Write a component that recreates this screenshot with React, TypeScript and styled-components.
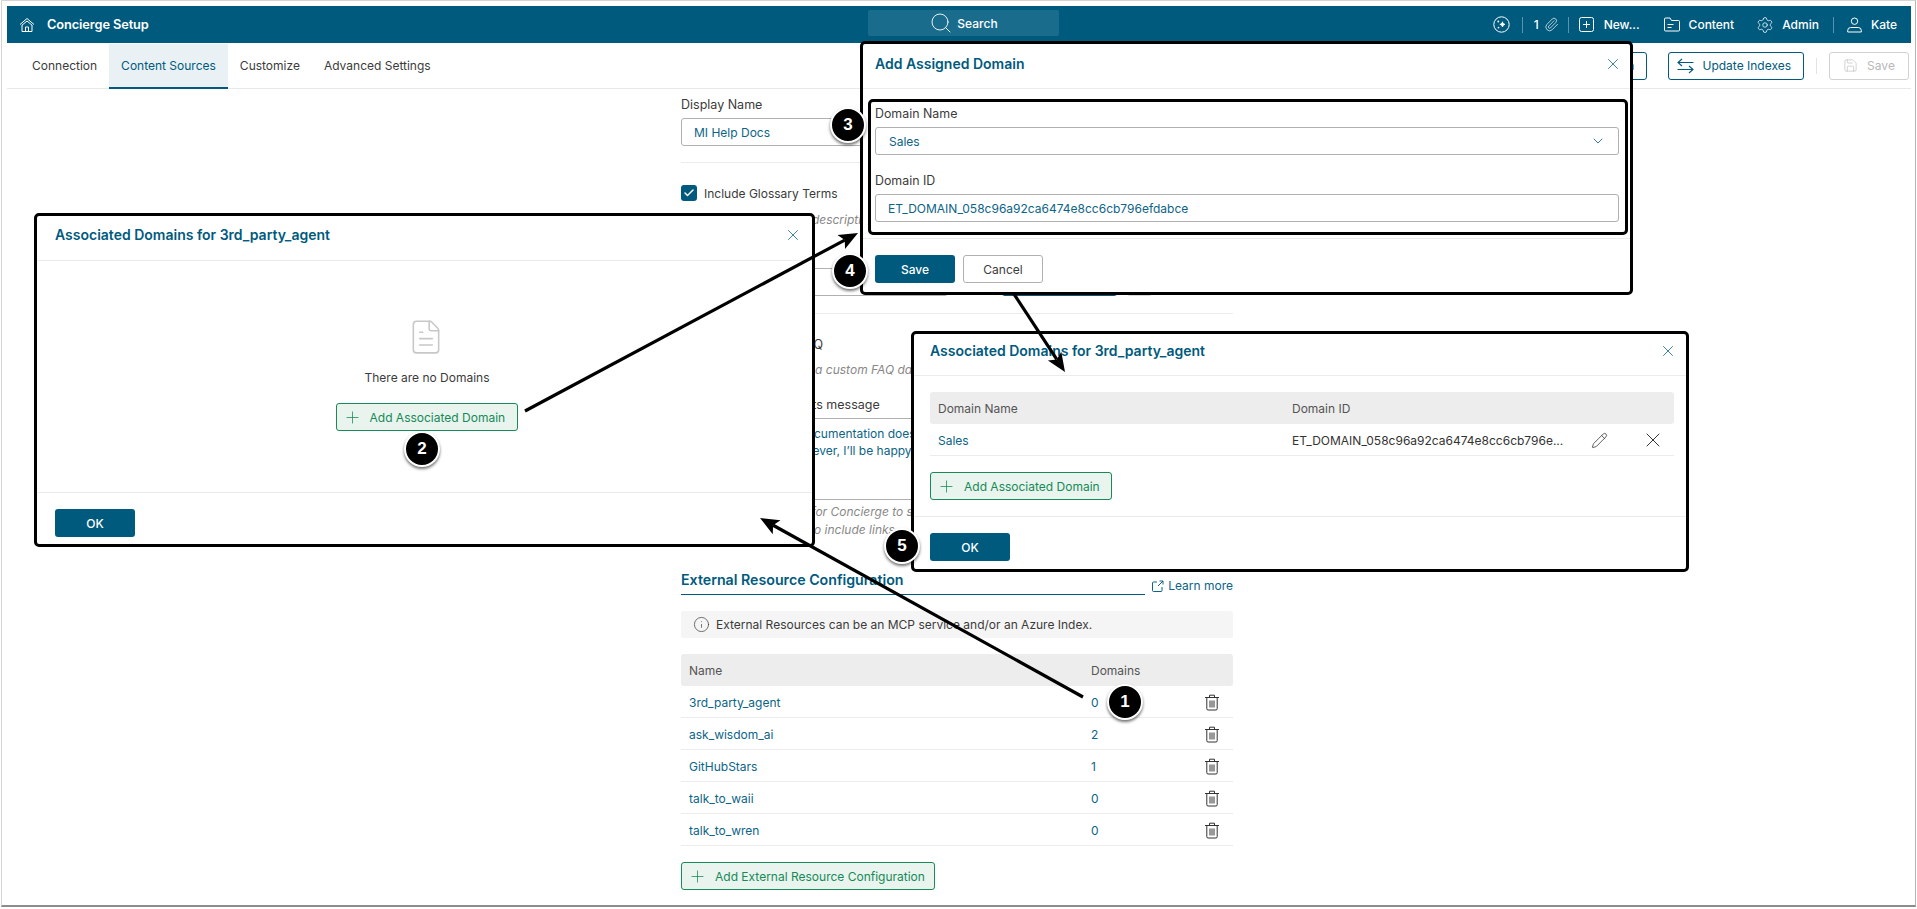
import React from 'react';
import styled, { createGlobalStyle } from 'styled-components';
import { ChevronDown, Check, Plus, X, Pencil, Search, Info, Paperclip, Settings, Save, FileText } from 'lucide-react';

const TEAL = '#005a7d';
const TEXT = '#3b3b3b';
const LINK = '#0c6486';
const GREEN = '#178a58';

const Global = createGlobalStyle`
  html, body { margin: 0; padding: 0; background: #fff; }
  * { box-sizing: border-box; }
  body { font-family: Inter, "Liberation Sans", sans-serif; font-size: 12px; color: ${TEXT}; }
`;

const Page = styled.div`
  position: relative;
  width: 1917px;
  height: 909px;
  overflow: hidden;
  background: #fff;
`;

const Frame = styled.div`
  width: 1915px;
  height: 907px;
  margin-left: 1px;
  padding: 5px 4px 0 5px;
  border: 1px solid #d4d4d4;
  border-right: 1px solid #b5b5b5;
  border-bottom: 2px solid #8c8c8c;
  overflow: hidden;
`;

const Header = styled.header`
  position: relative;
  display: flex;
  align-items: center;
  height: 37px;
  background: ${TEAL};
  color: #fff;
  padding-left: 12px;
`;

const Brand = styled.div`
  display: flex;
  align-items: center;
  gap: 12px;
  font-weight: 600;
  font-size: 12.8px;
  letter-spacing: -0.1px;
`;

const SearchBox = styled.div`
  position: absolute;
  left: 861px;
  top: 4px;
  width: 191px;
  height: 26px;
  display: flex;
  align-items: center;
  justify-content: center;
  gap: 4px;
  background: #1a6c8d;
  border-radius: 2px;
  font-size: 12px;
  font-weight: 500;
`;

const HeaderNav = styled.nav`
  margin-left: auto;
  display: flex;
  align-items: center;
  padding-right: 14px;
  font-size: 12px;
  font-weight: 500;
`;

const NavItem = styled.span<{ $ml?: number; $gap?: number }>`
  display: inline-flex;
  align-items: center;
  gap: ${(p) => p.$gap ?? 8}px;
  margin-left: ${(p) => p.$ml ?? 0}px;
`;

const NavSep = styled.span<{ $ml: number }>`
  display: inline-block;
  width: 1px;
  height: 16px;
  background: #5c93aa;
  margin-left: ${(p) => p.$ml}px;
`;

const TabBar = styled.div`
  display: flex;
  align-items: center;
  height: 46px;
  border-bottom: 1px solid #e8e8e8;
  padding-left: 13px;
  padding-right: 2px;
`;

const Tab = styled.div<{ $active?: boolean }>`
  height: 45px;
  padding: 0 12px;
  display: flex;
  align-items: center;
  font-size: 12px;
  color: ${(p) => (p.$active ? TEAL : TEXT)};
  background: ${(p) => (p.$active ? '#e9f1f5' : 'transparent')};
  border-bottom: 2px solid ${(p) => (p.$active ? TEAL : 'transparent')};
  margin-bottom: -1px;
`;

const TabActions = styled.div`
  margin-left: auto;
  display: flex;
  align-items: center;
`;

const OutlineButton = styled.button<{ $ml?: number }>`
  height: 28px;
  display: inline-flex;
  align-items: center;
  gap: 8px;
  margin-left: ${(p) => p.$ml ?? 0}px;
  padding: 0 12px 0 8px;
  background: #fff;
  border: 1px solid ${TEAL};
  border-radius: 3px;
  color: ${TEAL};
  font: 12px Inter, sans-serif;
`;

const DisabledButton = styled.button`
  width: 80px;
  height: 28px;
  display: inline-flex;
  align-items: center;
  justify-content: center;
  gap: 9px;
  background: #fff;
  border: 1px solid #d2d2d2;
  border-radius: 3px;
  color: #b8b8b8;
  font: 12px Inter, sans-serif;
`;

const ToolSep = styled.span`
  width: 1px;
  height: 16px;
  background: #e3e3e3;
  margin: 0 12px;
`;

const Main = styled.main`
  width: 552px;
  margin-left: 674px;
  padding-top: 7px;
  display: flex;
  flex-direction: column;
`;

const Line = styled.div<{ $mt?: number }>`
  margin-top: ${(p) => p.$mt ?? 0}px;
  height: 18px;
  line-height: 18px;
  font-size: 12.5px;
  color: ${TEXT};
  white-space: nowrap;
`;

const Hint = styled(Line)`
  font-size: 12px;
  font-style: italic;
  color: #888;
`;

const Input = styled.div<{ $mt?: number; $pad?: number }>`
  margin-top: ${(p) => p.$mt ?? 0}px;
  height: 28px;
  padding: 0 12px 0 ${(p) => p.$pad ?? 12}px;
  display: flex;
  align-items: center;
  justify-content: space-between;
  border: 1px solid #b0b0b0;
  border-radius: 3px;
  color: ${LINK};
  font-size: 12px;
  background: #fff;
`;

const Rule = styled.div<{ $mt: number }>`
  margin-top: ${(p) => p.$mt}px;
  height: 1px;
  background: #ececec;
`;

const CheckRow = styled.div`
  margin-top: 21px;
  height: 18px;
  display: flex;
  align-items: center;
  gap: 7px;
  font-size: 12px;
`;

const CheckBox = styled.span`
  width: 16px;
  height: 16px;
  border-radius: 3px;
  background: ${TEAL};
  color: #fff;
  display: flex;
  align-items: center;
  justify-content: center;
`;

const ActionRow = styled.div`
  margin-top: 39px;
  display: flex;
  height: 28px;
`;

const GhostInput = styled.div`
  width: 267px;
  border: 1px solid #b0b0b0;
  border-radius: 3px;
`;

const HiddenPrimary = styled.div`
  width: 115px;
  margin-left: 54px;
  background: ${TEAL};
  border-radius: 3px;
`;

const HiddenGrey = styled.div`
  width: 25px;
  margin-left: 10px;
  background: #d9d9d9;
  border-radius: 3px;
`;

const MessageBox = styled.div`
  margin-top: 4px;
  height: 82px;
  padding: 6px 12px 0 0;
  border-top: 1px solid #b0b0b0;
  border-bottom: 1px solid #b0b0b0;
  color: ${LINK};
  font-size: 12px;
  line-height: 17px;
  white-space: nowrap;
`;

const SectionRow = styled.div`
  margin-top: 32px;
  display: flex;
  align-items: flex-end;
  justify-content: space-between;
  height: 24px;
`;

const SectionTitle = styled.div`
  width: 464px;
  height: 24px;
  border-bottom: 1px solid ${TEAL};
  color: ${TEAL};
  font-size: 14.2px;
  font-weight: 600;
  line-height: 18px;
`;

const LearnMore = styled.a`
  display: inline-flex;
  align-items: center;
  gap: 4px;
  color: ${LINK};
  font-size: 12px;
  line-height: 18px;
`;

const InfoBar = styled.div`
  margin-top: 16px;
  height: 27px;
  display: flex;
  align-items: center;
  gap: 6px;
  padding-left: 12px;
  background: #f5f5f5;
  font-size: 12px;
  border-radius: 2px;
`;

const TableHead = styled.div<{ $cols: string; $mt?: number }>`
  margin-top: ${(p) => p.$mt ?? 0}px;
  height: 32px;
  display: grid;
  grid-template-columns: ${(p) => p.$cols};
  align-items: center;
  background: #ededed;
  border-radius: 3px;
  color: #555;
  font-size: 12px;
  padding-left: 8px;
`;

const TableRow = styled.div<{ $cols: string }>`
  height: 32px;
  display: grid;
  grid-template-columns: ${(p) => p.$cols};
  align-items: center;
  padding: 1px 0 0 8px;
  border-bottom: 1px solid #ececec;
  color: ${LINK};
  font-size: 12px;
`;

const Ellipsis = styled.span`
  color: #333;
  white-space: nowrap;
  overflow: hidden;
  text-overflow: ellipsis;
`;

const IconCell = styled.span`
  display: flex;
  align-items: center;
  justify-content: center;
  color: #333;
`;

const GreenButton = styled.button<{ $mt?: number; $w: number }>`
  margin-top: ${(p) => p.$mt ?? 0}px;
  width: ${(p) => p.$w}px;
  height: 28px;
  display: inline-flex;
  align-items: center;
  flex-shrink: 0;
  gap: 8px;
  padding: 0 0 0 6px;
  background: #e9f4ee;
  border: 1px solid ${GREEN};
  border-radius: 3px;
  color: ${GREEN};
  font: 12px Inter, sans-serif;
  white-space: nowrap;
`;

const Dialog = styled.section<{ $x: number; $y: number; $w: number; $h: number; $z?: number }>`
  position: absolute;
  left: ${(p) => p.$x}px;
  top: ${(p) => p.$y}px;
  width: ${(p) => p.$w}px;
  height: ${(p) => p.$h}px;
  z-index: ${(p) => p.$z ?? 2};
  display: flex;
  flex-direction: column;
  background: #fff;
  border: 3px solid #000;
  border-radius: 5px;
`;

const DialogHead = styled.div<{ $h: number; $pad: number; $top: number; $closeRight: number }>`
  height: ${(p) => p.$h}px;
  flex-shrink: 0;
  display: flex;
  align-items: flex-start;
  justify-content: space-between;
  padding: ${(p) => p.$top}px ${(p) => p.$closeRight}px 0 ${(p) => p.$pad}px;
  border-bottom: 1px solid #ececec;
`;

const DialogTitle = styled.h2`
  margin: 0;
  height: 20px;
  line-height: 20px;
  color: ${TEAL};
  font-size: 14px;
  font-weight: 600;
`;

const CloseBtn = styled.span`
  display: flex;
  height: 20px;
  align-items: center;
  color: ${TEAL};
`;

const EmptyBody = styled.div`
  flex: 1;
  display: flex;
  flex-direction: column;
  align-items: center;
  padding: 57px 0 0 4px;
`;

const EmptyIcon = styled.span`
  display: flex;
  color: #c8c8c8;
  margin-left: -2px;
`;

const EmptyText = styled.div`
  margin-top: 13px;
  margin-left: 1px;
  height: 18px;
  line-height: 18px;
  font-size: 12px;
`;

const DialogFoot = styled.div<{ $pad: number; $h?: number }>`
  height: ${(p) => p.$h ?? 52}px;
  flex-shrink: 0;
  display: flex;
  gap: 8px;
  padding: 16px 0 0 ${(p) => p.$pad}px;
  border-top: 1px solid #ececec;
`;

const PrimaryButton = styled.button`
  width: 80px;
  height: 28px;
  background: ${TEAL};
  border: none;
  border-radius: 3px;
  color: #fff;
  font: 500 12px Inter, sans-serif;
`;

const SecondaryButton = styled.button`
  width: 80px;
  height: 28px;
  background: #fff;
  border: 1px solid #b0b0b0;
  border-radius: 3px;
  color: ${TEXT};
  font: 12px Inter, sans-serif;
`;

const TableBody = styled.div`
  flex: 1;
  display: flex;
  flex-direction: column;
  padding: 16px 12px 0 16px;
`;

const Highlight = styled.div`
  margin: 10px 2px 3px 5px;
  height: 136px;
  padding: 3px 6px 0 4px;
  border: 3px solid #000;
  border-radius: 5px;
  flex-shrink: 0;
`;

const FormLabel = styled.div<{ $mt?: number }>`
  height: 18px;
  line-height: 18px;
  margin-top: ${(p) => p.$mt ?? 0}px;
  font-size: 12.4px;
`;

const Badge = styled.div<{ $x: number; $y: number }>`
  position: absolute;
  z-index: 5;
  left: ${(p) => p.$x - 18}px;
  top: ${(p) => p.$y - 18}px;
  width: 36px;
  height: 36px;
  border-radius: 50%;
  background: #000;
  border: 2px solid #fff;
  box-shadow: 0 2px 3px rgba(0, 0, 0, 0.55);
  display: flex;
  align-items: center;
  justify-content: center;
  color: #fff;
  font: 700 17px "Liberation Sans", Arial, sans-serif;
`;

const ArrowLayer = styled.svg`
  position: absolute;
  left: 0;
  top: 0;
  z-index: 4;
  pointer-events: none;
`;

const Arrow = ({ x1, y1, x2, y2 }: { x1: number; y1: number; x2: number; y2: number }) => {
  const len = Math.hypot(x2 - x1, y2 - y1);
  const ux = (x2 - x1) / len;
  const uy = (y2 - y1) / len;
  const bx = x2 - ux * 19;
  const by = y2 - uy * 19;
  const nx = -uy * 8;
  const ny = ux * 8;
  return (
    <g>
      <line x1={x1} y1={y1} x2={bx + ux * 4} y2={by + uy * 4} stroke="#000" strokeWidth={3.2} />
      <polygon points={`${x2},${y2} ${bx + nx},${by + ny} ${bx + ux * 4},${by + uy * 4} ${bx - nx},${by - ny}`} fill="#000" />
    </g>
  );
};

const HomeIcon = () => (
  <svg width="16" height="16" viewBox="0 0 16 16" fill="none" stroke="#fff" strokeWidth="1">
    <path d="M1 7.5 8 1.5l7 6" />
    <path d="M3 8.2 8 4l5 4.2" />
    <path d="M3 8v6.5h10V8" />
    <path d="M6.5 14.5V10h3v4.5" />
  </svg>
);

const SparkIcon = () => (
  <svg width="17" height="17" viewBox="0 0 17 17" fill="none" stroke="#fff" strokeWidth="1">
    <circle cx="8.5" cy="8.5" r="7.7" />
    <path d="M9.5 5.8c.3 1.600.9 2.300 2.500 2.600-1.600.4-2.200 1-2.500 2.600-.4-1.600-1-2.200-2.600-2.600 1.600-.3 2.200-1 2.600-2.600Z" fill="#fff" />
    <circle cx="5.3" cy="5.5" r=".9" fill="#fff" stroke="none" />
    <circle cx="5.5" cy="11.6" r=".9" fill="#fff" stroke="none" />
  </svg>
);

const PlusBoxIcon = () => (
  <svg width="15" height="15" viewBox="0 0 15 15" fill="none" stroke="#fff" strokeWidth="1">
    <rect x=".5" y=".5" width="14" height="14" rx="2" />
    <path d="M7.500 4v7M4 7.500h7" />
  </svg>
);

const FolderIcon = () => (
  <svg width="16" height="15" viewBox="0 0 16 15" fill="none" stroke="#fff" strokeWidth="1">
    <path d="M.5 13V2a1 1 0 0 1 1-1h4.500l1.500 2.500h7a1 1 0 0 1 1 1V13a1 1 0 0 1-1 1h-13a1 1 0 0 1-1-1Z" />
    <path d="M3.500 7.500h6M3.500 10.500h4" />
  </svg>
);

const UserIcon = () => (
  <svg width="15" height="16" viewBox="0 0 15 16" fill="none" stroke="#fff" strokeWidth="1">
    <circle cx="7.500" cy="4.200" r="3.200" />
    <path d="M.7 15v-1.500a3 3 0 0 1 3-3h7.600a3 3 0 0 1 3 3V15Z" />
  </svg>
);

const SwapIcon = () => (
  <svg width="17" height="16" viewBox="0 0 17 16" fill="none" stroke={TEAL} strokeWidth="1.1">
    <path d="M1 4.500h15.500M5 1 1 4.500 5 8" />
    <path d="M16 11.500H.5M12 8l4 3.500-4 3.500" />
  </svg>
);

const TrashIcon = () => (
  <svg width="16" height="17" viewBox="0 0 16 17" fill="none" stroke="#333" strokeWidth="1">
    <path d="M1 3.500h14M5.500 3.500V1.200h5v2.300" />
    <path d="M2.800 3.500v11.300a1.200 1.200 0 0 0 1.200 1.200h8a1.200 1.200 0 0 0 1.200-1.200V3.500" />
    <path d="M6 6.500v7M8 6.500v7M10 6.500v7" />
  </svg>
);

const ExternalIcon = () => (
  <svg width="12" height="12" viewBox="0 0 12 12" fill="none" stroke={LINK} strokeWidth="1">
    <path d="M5 2H1.500a1 1 0 0 0-1 1v7.500a1 1 0 0 0 1 1H9a1 1 0 0 0 1-1V7" />
    <path d="M6 6l5-5M7.500 1H11v3.500" />
  </svg>
);

const rows = [
  ['3rd_party_agent', '0'],
  ['ask_wisdom_ai', '2'],
  ['GitHubStars', '1'],
  ['talk_to_waii', '0'],
  ['talk_to_wren', '0'],
];

const EXT_COLS = '402px 1fr 42px';
const DOM_COLS = '354px 278px 58px 50px';

export default function App() {
  return (
    <Page>
      <Global />
      <Frame>
        <Header>
          <Brand>
            <HomeIcon />
            Concierge Setup
          </Brand>
          <SearchBox>
            <Search size={24} strokeWidth={0.9} />
            Search
          </SearchBox>
          <HeaderNav>
            <SparkIcon />
            <NavSep $ml={12} />
            <NavItem $ml={11} $gap={5}>
              1 <Paperclip size={15} strokeWidth={1.1} />
            </NavItem>
            <NavSep $ml={9} />
            <NavItem $ml={10} $gap={10}>
              <PlusBoxIcon /> New...
            </NavItem>
            <NavItem $ml={24} $gap={9}>
              <FolderIcon /> Content
            </NavItem>
            <NavItem $ml={22}>
              <Settings size={18} strokeWidth={1} /> Admin
            </NavItem>
            <NavSep $ml={14} />
            <NavItem $ml={13} $gap={9}>
              <UserIcon /> Kate
            </NavItem>
          </HeaderNav>
        </Header>
        <TabBar>
          <Tab>Connection</Tab>
          <Tab $active>Content Sources</Tab>
          <Tab>Customize</Tab>
          <Tab>Advanced Settings</Tab>
          <TabActions>
            <OutlineButton>Test Connection</OutlineButton>
            <OutlineButton $ml={21}>
              <SwapIcon />
              Update Indexes
            </OutlineButton>
            <ToolSep />
            <DisabledButton>
              <Save size={15} strokeWidth={1} />
              Save
            </DisabledButton>
          </TabActions>
        </TabBar>
        <Main>
          <Line>Display Name</Line>
          <Input $mt={4}>MI Help Docs</Input>
          <Rule $mt={16} />
          <CheckRow>
            <CheckBox>
              <Check size={12} strokeWidth={3} />
            </CheckBox>
            Include Glossary Terms
          </CheckRow>
          <Hint $mt={9}>Shows terms and their descriptions in the answers</Hint>
          <ActionRow>
            <GhostInput />
            <HiddenPrimary />
            <HiddenGrey />
          </ActionRow>
          <Rule $mt={17} />
          <Line $mt={22}>Include the Custom FAQ</Line>
          <Hint $mt={7}>Allow Concierge to use a custom FAQ database</Hint>
          <Line $mt={17}>No Relevant Documents message</Line>
          <MessageBox>
            Unfortunately, these documentation does not cover this.
            <br />
            in the information. However, I’ll be happy to help you.
          </MessageBox>
          <Hint $mt={3}>Add some instructions for Concierge to search</Hint>
          <Hint>Instructions do let you to include links</Hint>
          <SectionRow>
            <SectionTitle>External Resource Configuration</SectionTitle>
            <LearnMore>
              <ExternalIcon />
              Learn more
            </LearnMore>
          </SectionRow>
          <InfoBar>
            <Info size={17} strokeWidth={1} />
            External Resources can be an MCP service and/or an Azure Index.
          </InfoBar>
          <TableHead $cols={EXT_COLS} $mt={16}>
            <span>Name</span>
            <span>Domains</span>
          </TableHead>
          {rows.map(([name, count]) => (
            <TableRow key={name} $cols={EXT_COLS}>
              <span>{name}</span>
              <span>{count}</span>
              <IconCell>
                <TrashIcon />
              </IconCell>
            </TableRow>
          ))}
          <GreenButton $mt={16} $w={254}>
            <Plus size={19} strokeWidth={1} />
            Add External Resource Configuration
          </GreenButton>
        </Main>
      </Frame>

      <Dialog $x={860} $y={41} $w={773} $h={254}>
        <DialogHead $h={45} $pad={12} $top={10} $closeRight={8}>
          <DialogTitle>Add Assigned Domain</DialogTitle>
          <CloseBtn>
            <X size={18} strokeWidth={1} />
          </CloseBtn>
        </DialogHead>
        <Highlight>
          <FormLabel>Domain Name</FormLabel>
          <Input $mt={4} $pad={13}>
            Sales
            <ChevronDown size={16} strokeWidth={1.2} color={TEAL} />
          </Input>
          <FormLabel $mt={17}>Domain ID</FormLabel>
          <Input $mt={4}>ET_DOMAIN_058c96a92ca6474e8cc6cb796efdabce</Input>
        </Highlight>
        <DialogFoot $pad={12} $h={54}>
          <PrimaryButton>Save</PrimaryButton>
          <SecondaryButton>Cancel</SecondaryButton>
        </DialogFoot>
      </Dialog>

      <Dialog $x={34} $y={213} $w={781} $h={334}>
        <DialogHead $h={45} $pad={18} $top={9} $closeRight={10}>
          <DialogTitle>Associated Domains for 3rd_party_agent</DialogTitle>
          <CloseBtn>
            <X size={18} strokeWidth={1} />
          </CloseBtn>
        </DialogHead>
        <EmptyBody>
          <EmptyIcon>
            <FileText size={38} strokeWidth={1} />
          </EmptyIcon>
          <EmptyText>There are no Domains</EmptyText>
          <GreenButton $mt={16} $w={182}>
            <Plus size={19} strokeWidth={1} />
            Add Associated Domain
          </GreenButton>
        </EmptyBody>
        <DialogFoot $pad={18}>
          <PrimaryButton>OK</PrimaryButton>
        </DialogFoot>
      </Dialog>

      <Dialog $x={911} $y={331} $w={778} $h={241}>
        <DialogHead $h={42} $pad={16} $top={7} $closeRight={9}>
          <DialogTitle>Associated Domains for 3rd_party_agent</DialogTitle>
          <CloseBtn>
            <X size={18} strokeWidth={1} />
          </CloseBtn>
        </DialogHead>
        <TableBody>
          <TableHead $cols={DOM_COLS}>
            <span>Domain Name</span>
            <span>Domain ID</span>
          </TableHead>
          <TableRow $cols={DOM_COLS}>
            <span>Sales</span>
            <Ellipsis>ET_DOMAIN_058c96a92ca6474e8cc6cb796e...</Ellipsis>
            <IconCell>
              <Pencil size={17} strokeWidth={1.1} />
            </IconCell>
            <IconCell>
              <X size={24} strokeWidth={1} />
            </IconCell>
          </TableRow>
          <GreenButton $mt={16} $w={182}>
            <Plus size={19} strokeWidth={1} />
            Add Associated Domain
          </GreenButton>
        </TableBody>
        <DialogFoot $pad={16} $h={53}>
          <PrimaryButton>OK</PrimaryButton>
        </DialogFoot>
      </Dialog>

      <ArrowLayer width="1917" height="909">
        <Arrow x1={1083} y1={697} x2={760} y2={518} />
        <Arrow x1={525} y1={411} x2={858} y2={233} />
        <Arrow x1={1014} y1={294} x2={1065} y2={372} />
      </ArrowLayer>

      <Badge $x={1125} $y={702}>1</Badge>
      <Badge $x={422} $y={449}>2</Badge>
      <Badge $x={848} $y={125}>3</Badge>
      <Badge $x={850} $y={271}>4</Badge>
      <Badge $x={902} $y={546}>5</Badge>
    </Page>
  );
}
